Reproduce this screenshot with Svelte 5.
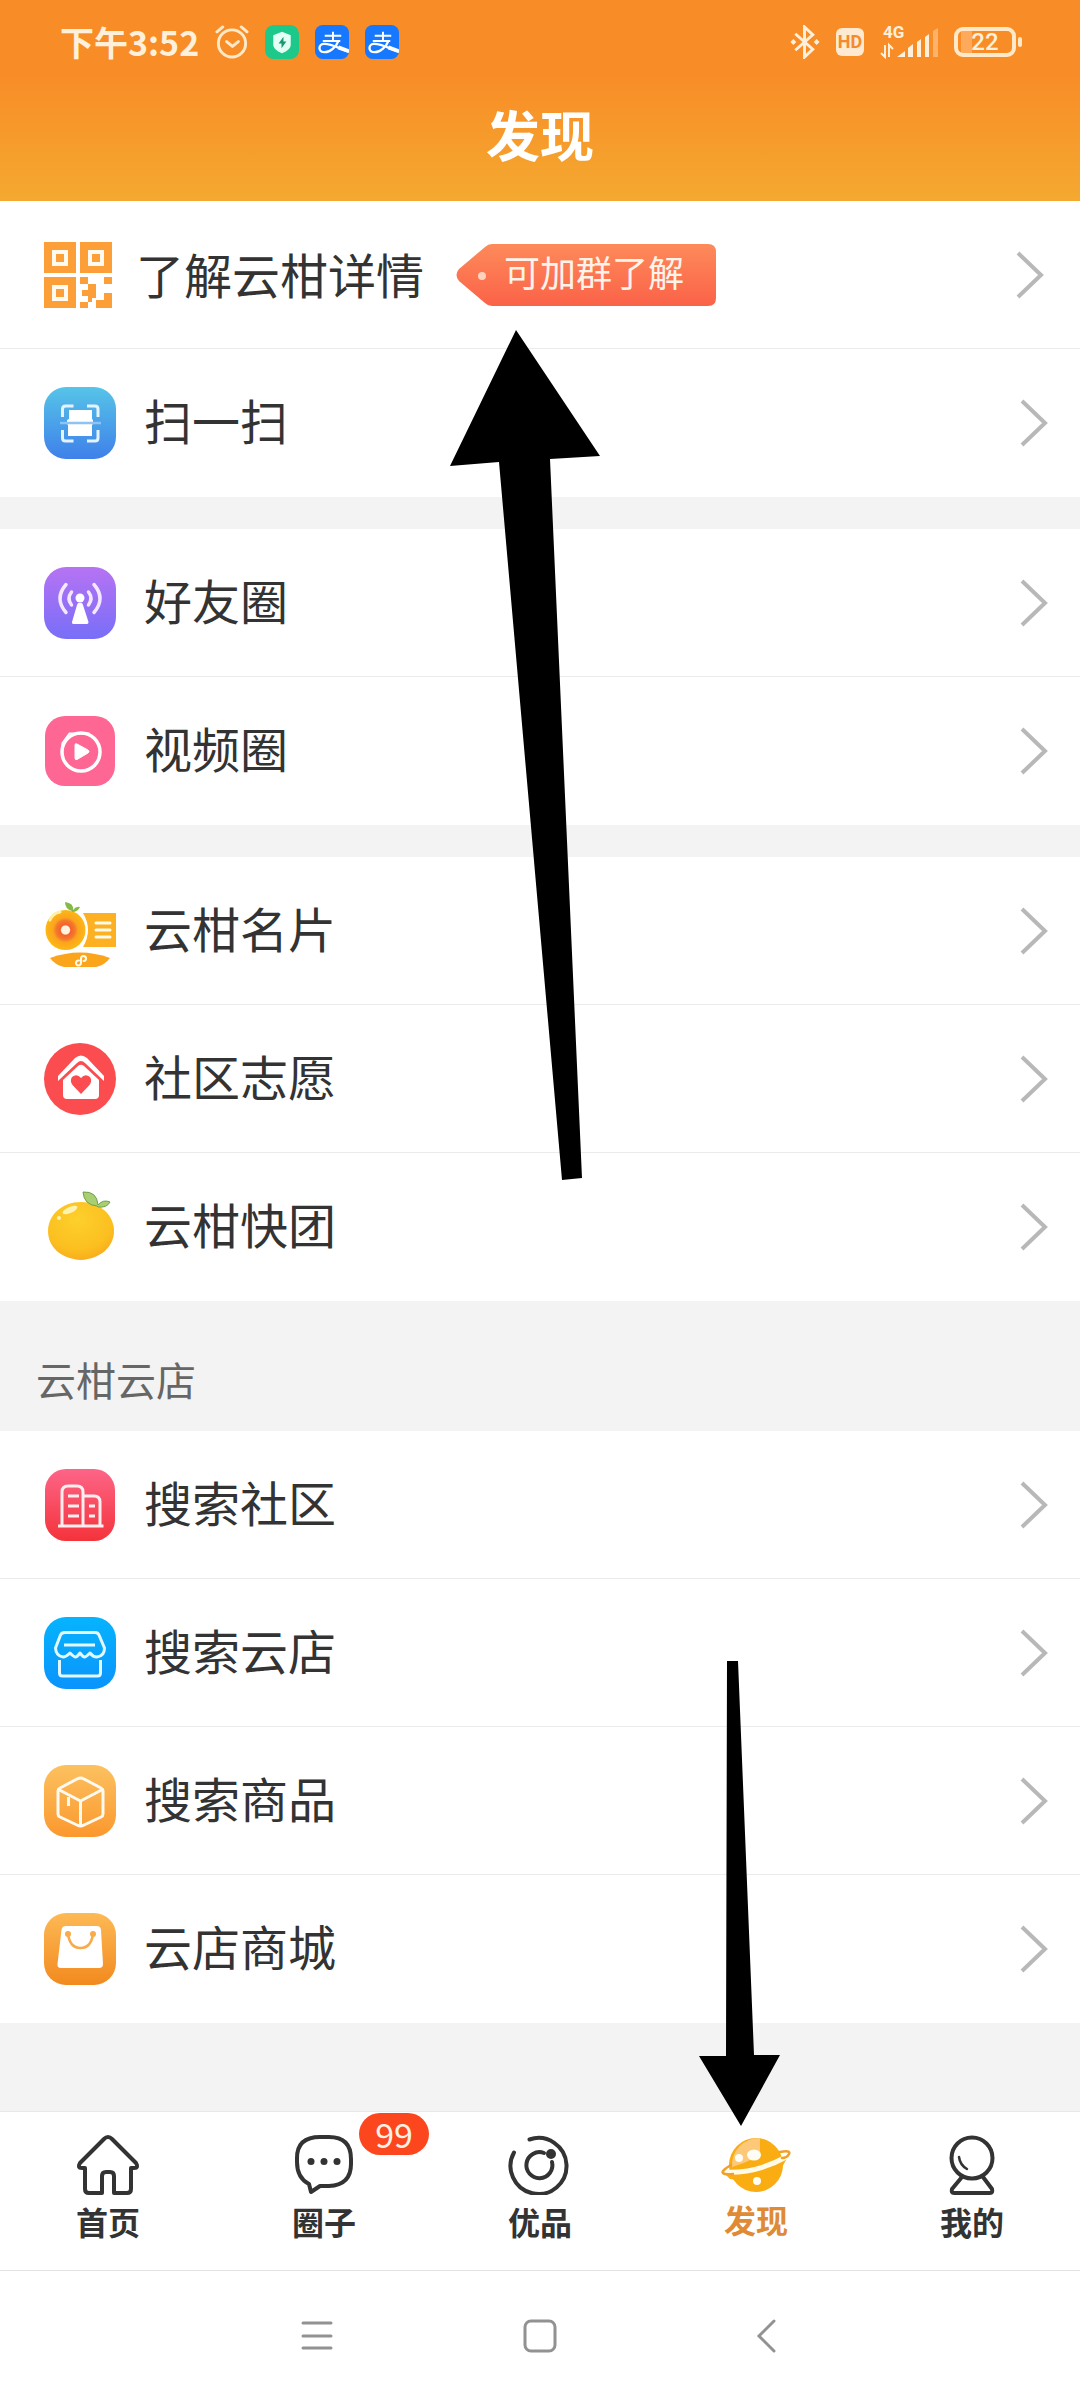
<script>
  const groups = [
    {
      rows: [
        { icon: 'qr', label: '了解云柑详情', tag: '可加群了解' },
        { icon: 'scan', label: '扫一扫' }
      ]
    },
    {
      rows: [
        { icon: 'antenna', label: '好友圈' },
        { icon: 'video', label: '视频圈' }
      ]
    },
    {
      rows: [
        { icon: 'card', label: '云柑名片' },
        { icon: 'volunteer', label: '社区志愿' },
        { icon: 'fruit', label: '云柑快团' }
      ]
    },
    {
      title: '云柑云店',
      rows: [
        { icon: 'building', label: '搜索社区' },
        { icon: 'store', label: '搜索云店' },
        { icon: 'box', label: '搜索商品' },
        { icon: 'bag', label: '云店商城' }
      ]
    }
  ];

  const tabs = [
    { icon: 'home', label: '首页' },
    { icon: 'chat', label: '圈子', badge: 99 },
    { icon: 'pick', label: '优品' },
    { icon: 'planet', label: '发现' },
    { icon: 'me', label: '我的' }
  ];

  let active = $state('planet');
</script>

{#snippet gradient(id, from, to)}
  <defs>
    <linearGradient {id} x1="0" y1="0" x2="0" y2="1">
      <stop offset="0" stop-color={from} />
      <stop offset="1" stop-color={to} />
    </linearGradient>
  </defs>
{/snippet}

{#snippet alipay()}
  <svg class="app" viewBox="0 0 35 35" aria-label="支付宝">
    <rect width="35" height="35" rx="8" fill="#1677ff" />
    <g fill="none" stroke="#fff" stroke-width="2">
      <path d="M10 11h17M18.500 7v9M8 16.500h18" />
      <path d="M24 16.500C22 22 16 28 10 28c-7 0-7-8-1-8.500C17 19 26 25 35 27.500" stroke-width="2.400" />
      <path d="M24 23l11 4" stroke-width="4" />
    </g>
  </svg>
{/snippet}

{#snippet rowIcon(name)}
  {#if name === 'qr'}
    <svg class="qr" viewBox="0 0 68 66" aria-hidden="true">
      <g fill="#fc9f39">
        <path d="M0 0h32v31H0zM36 0h32v31H36zM0 35h32v31H0z" />
        <path d="M36 35h8v7h-8zM60 35h8v7h-8zM44 42h8v14h-4v4h-4v-6h-6v-6h6zM36 60h8v6h-8zM60 51h8v15H52v-8h8z" />
      </g>
      <g fill="#fc9f39" stroke="#fffaf0" stroke-width="4">
        <path d="M10 10h12v12H10zM46 10h12v12H46zM10 45h12v12H10z" />
      </g>
    </svg>
  {:else}
    <svg class="icon" viewBox="0 0 72 72" aria-hidden="true">
      {#if name === 'scan'}
        {@render gradient('g-scan', '#56c4e8', '#3f80ea')}
        <rect width="72" height="72" rx="22" fill="url(#g-scan)" />
        <g fill="none" stroke="#e4f4ff" stroke-width="3">
          <path d="M18.500 30V22q0-3 3-3h8M43 19h8q3 0 3 3v8M18.500 43v8q0 3 3 3h8M43 54h8q3 0 3-3v-8" />
        </g>
        <path d="M25 23h23v9l1 1v4l-1 1v11H24V38l-1-1v-4l2-1z" fill="#fff" />
        <path d="M16 36h41" stroke="#8ec3f3" stroke-width="2.500" />
      {:else if name === 'antenna'}
        {@render gradient('g-ant', '#b673f3', '#786ef8')}
        <rect width="72" height="72" rx="22" fill="url(#g-ant)" />
        <circle cx="36" cy="31" r="4.500" fill="#fff" />
        <path d="M34.500 36h3q1 0 1.500 2l5.500 17q0 2-1.500 2H29.500q-2 0-1.500-2l5-17q.5-2 1.500-2z" fill="#fff" />
        <g fill="none" stroke="#f3e8ff" stroke-width="3.500" stroke-linecap="round">
          <path d="M22 17.500q-12 14 0 28M50 17.500q12 14 0 28" />
          <path d="M27.500 25q-5 6.500 0 13M44.500 25q5 6.500 0 13" />
        </g>
      {:else if name === 'video'}
        <rect x="1" y="1" width="70" height="70" rx="20" fill="#fe6694" />
        <circle cx="37" cy="37" r="19" fill="none" stroke="#fff" stroke-width="3.500" />
        <path d="M18.500 36V28l7-9.500h20" fill="none" stroke="#fff" stroke-width="2" />
        <path d="M33 29l11 6q2 1.500 0 3l-11 6.500q-2 1-2-1.500V30q0-2 2-1z" fill="#fff" stroke="#fff" />
      {:else if name === 'card'}
        <defs>
          <radialGradient id="g-card">
            <stop offset="0.200" stop-color="#fff3e0" />
            <stop offset="0.260" stop-color="#f4622a" />
            <stop offset="0.480" stop-color="#f47a2c" />
            <stop offset="0.620" stop-color="#fba41e" />
            <stop offset="1" stop-color="#fdb813" />
          </radialGradient>
        </defs>
        <path d="M39 18h33v34H39q10-17 0-34z" fill="#fdb022" />
        <path d="M52 28h14M52 35h14M52 42h14" stroke="#fffbe8" stroke-width="3" stroke-linecap="round" />
        <circle cx="21.500" cy="35" r="20" fill="url(#g-card)" />
        <path d="M6 25q3-7 10-8" stroke="#fff0a8" stroke-width="3" stroke-linecap="round" fill="none" />
        <path d="M28 16q-7-2-7-9 9 1 8 8 3-4 7-3-2 5-8 5z" fill="#86b948" />
        <path d="M6 63q30-11 60 0-5 7-14 9H20q-9-2-14-9z" fill="#fba51c" />
        <path d="M37 66V63.500a2.500 2.500 0 1 1 2.500 2.500M35 65.500a2.500 2.500 0 1 0 2 2.500V65" fill="none" stroke="#fffbe8" stroke-width="2" stroke-linecap="round" />
      {:else if name === 'volunteer'}
        <circle cx="36" cy="36" r="36" fill="#fb4c4f" />
        <path d="M14 33L31 15q6-5 12 0l17 18v5L41 20q-4-4-8 0L14 38z" fill="#fff" />
        <path d="M19 37L34 23q3-2.500 6 0l15 14v15q0 4-4 4H23q-4 0-4-4z" fill="#fff" />
        <path d="M37 51L28.500 42q-3-4-.5-8 5-4 9 1 4-5 9-1 2.500 4-.5 8z" fill="#fb4c4f" />
      {:else if name === 'fruit'}
        <defs>
          <radialGradient id="g-fruit" cx="0.450" cy="0.300" r="0.750">
            <stop offset="0" stop-color="#fdd02c" />
            <stop offset="0.700" stop-color="#fbbf20" />
            <stop offset="1" stop-color="#f9a81c" />
          </radialGradient>
        </defs>
        <path d="M37 11c19 0 33 13 33 29S56 68 37 69C17 68 4 56 4 40s14-29 33-29z" fill="url(#g-fruit)" />
        <ellipse cx="26" cy="19" rx="8" ry="3" transform="rotate(-24 26 19)" fill="#fff2b0" />
        <circle cx="15" cy="27" r="2" fill="#fff2b0" />
        <path d="M53 15Q40 14 39 1q14-1 15 13 5-6 12-3-3 6-12 5z" fill="#a9cf72" stroke="#6fa04a" stroke-width="1" />
      {:else if name === 'building'}
        {@render gradient('g-bld', '#fd6587', '#f4333b')}
        <rect x="1" width="70" height="72" rx="21" fill="url(#g-bld)" />
        <g fill="none" stroke="#ffeef0" stroke-width="3">
          <path d="M14 57h45.500M18 57V23q0-6 6-6h9q6 0 6 6v34M39 27h11q6 0 6 6v24" />
          <path d="M24 27h11M24 37h11M24 47h11M45 37h6M45 47h6" />
        </g>
      {:else if name === 'store'}
        {@render gradient('g-store', '#06b4fd', '#0a93fc')}
        <rect width="72" height="72" rx="22" fill="url(#g-store)" />
        <g fill="none" stroke="#e2f8ff" stroke-width="3" stroke-linejoin="round">
          <path d="M21 15.500h30q3 0 4 2.500l5.500 13q0 8-7.500 9-4 0-7-4-4 4-5.500 4-1.500 0-4.500-4-3 4-4.500 4-1.500 0-5.500-4-4 4-7 4-7-1-7.500-9l5-13q1-2.500 4.500-2.500z" />
          <path d="M20 28h31M15.500 43v13q0 3 3 3h35q3 0 3-3V43" />
        </g>
      {:else if name === 'box'}
        {@render gradient('g-box', '#fcc160', '#fb982e')}
        <rect width="72" height="72" rx="22" fill="url(#g-box)" />
        <g fill="none" stroke="#fffaf0" stroke-width="3" stroke-linejoin="round">
          <path d="M33 14q3.500-2 7 0l17 9q2 1 2 3v23q0 2-2 3l-17 8q-3.500 2-7 0l-17-8q-2-1-2-3V26q0-2 2-3z" />
          <path d="M14.500 24.500L36.500 36l22-11.500M36.500 36v24M24.500 32v9" />
        </g>
      {:else}
        {@render gradient('g-bag', '#fdb955', '#f28a1e')}
        <rect width="72" height="72" rx="22" fill="url(#g-bag)" />
        <path d="M22 13h31q3.500 0 4 4l2 34q0 4-4 4H17q-4 0-3.500-4l4-34q.5-4 4.500-4z" fill="#fff" />
        <path d="M24 21q2 14 12.500 14T49 21" fill="none" stroke="#f9ab49" stroke-width="2.500" />
        <circle cx="24" cy="21" r="3" fill="#f9ab49" />
        <circle cx="49" cy="21" r="3" fill="#f9ab49" />
      {/if}
    </svg>
  {/if}
{/snippet}

{#snippet tabIcon(name)}
  <svg class="tab-icon" viewBox="0 0 72 60" aria-hidden="true">
    <g fill="none" stroke="#333" stroke-width="4" stroke-linejoin="round" stroke-linecap="round">
      {#if name === 'home'}
        <path d="M32 4q4-4 8 0l24 24q3 5-2 5h-3v21q0 4-4 4H42V41q0-4-4-4h-4q-4 0-4 4v17H17q-4 0-4-4V33h-3q-5 0-2-5z" />
      {:else if name === 'chat'}
        <path d="M32 2h9q22 0 22 22v5q0 21-22 22h-9l-9 6-2-8q-12-6-12-22v-4Q9 2 32 2z" />
        <g stroke="none" fill="#333">
          <circle cx="23" cy="26.500" r="3.500" />
          <circle cx="36" cy="26.500" r="3.500" />
          <circle cx="49" cy="26.500" r="3.500" />
        </g>
      {:else if name === 'pick'}
        <path d="M10 17.500A28 28 0 1 0 25.500 4.500" />
        <path d="M40 18A13 13 0 1 0 48 27" />
        <circle cx="47" cy="19" r="3" fill="#333" />
      {:else if name === 'planet'}
        <circle cx="36" cy="30" r="27" fill="#f9ad12" stroke="none" />
        <path d="M40 3v15q-3 6-28 14A27 27 0 0 1 40 3z" fill="#fdc878" stroke="none" />
        <path d="M4 38q34 2 66-20l-9 16Q36 48 10 44z" fill="#f9ad12" stroke="none" />
        <path d="M3 37q33 2 63-15" stroke="#fffbe8" stroke-width="5" />
        <path d="M11 30q-10 6-8 8t10 1M60 17q11-2 9 2t-7 4" stroke="#f0a12c" stroke-width="2.500" />
        <g fill="#fffdf4" stroke="none">
          <ellipse cx="34" cy="20" rx="7" ry="5.500" />
          <circle cx="19" cy="23" r="4" />
          <circle cx="37" cy="46" r="4" />
        </g>
      {:else}
        <circle cx="36" cy="23" r="20.500" />
        <path d="M26 42L16 54q-1 4 2 4h36q3 0 2-4l-9-12" />
        <path d="M23 22q1 8 8 12" stroke-width="2.500" />
      {/if}
    </g>
  </svg>
{/snippet}

<div class="page">
  <header>
    <div class="status">
      <span class="time">下午3:52</span>
      <svg class="app" viewBox="0 0 35 35" aria-hidden="true">
        <g fill="none" stroke="#ffe9c8" stroke-width="3" stroke-linecap="round" stroke-linejoin="round">
          <circle cx="17.500" cy="19" r="14" />
          <path d="M12 17l6 5 6-5M2 7l6-5M33 7l-6-5" />
        </g>
      </svg>
      <svg class="app" viewBox="0 0 35 35" aria-hidden="true">
        <rect width="35" height="35" rx="9" fill="#1cc98a" />
        <path d="M17.500 7l9 3.500v10q0 5-9 8.500-9-3.500-9-8.500v-10z" fill="#e4fff4" />
        <path d="M19 12l-5 7h3v5l5-7h-3z" fill="#169a72" />
      </svg>
      {@render alipay()}
      {@render alipay()}
      <div class="status-right">
        <svg class="bluetooth" viewBox="0 0 30 35" aria-hidden="true">
          <path d="M5 9l18 16-8.500 8V2L23 10 5 26" fill="none" stroke="#fff0dc" stroke-width="3" />
          <path d="M3 14.500l3 3-3 3-3-3zM27 14.500l3 3-3 3-3-3z" fill="#fff0dc" />
        </svg>
        <span class="hd">HD</span>
        <div class="network">
          <span>4G</span>
          <svg viewBox="0 0 58 34" aria-hidden="true">
            <path d="M5 20v12l-4-4M9 32V20l4 4" fill="none" stroke="#fff0dc" stroke-width="2" />
            <path d="M17 32l8-6v6zM28 23l5-4v13h-5zM37 17l4-3v18h-4zM45 12l4-3v23h-4z" fill="#fff0dc" />
            <path d="M53 6l5-3v29h-5z" fill="#ffb36a" />
          </svg>
        </div>
        <div class="battery"><span>22</span></div>
      </div>
    </div>
    <h1>发现</h1>
  </header>

  <main>
    {#each groups as group}
      <section>
        {#if group.title}<h2>{group.title}</h2>{/if}
        {#each group.rows as row}
          <a class="row" class:featured={row.tag} href="#{row.icon}">
            {@render rowIcon(row.icon)}
            <span class="label">{row.label}</span>
            {#if row.tag}
              <span class="tag">
                <svg viewBox="0 0 260 62" aria-hidden="true">
                  {@render gradient('g-tag', '#fd8a5a', '#fb6248')}
                  <path d="M36 0H252q8 0 8 8V54q0 8-8 8H36q-4 0-7-3L3 37q-5-6 0-12L29 3q3-3 7-3z" fill="url(#g-tag)" />
                  <circle cx="26" cy="32" r="4" fill="#ffd2bd" />
                </svg>
                <span>{row.tag}</span>
              </span>
            {/if}
            <svg class="chevron" viewBox="0 0 28 48" aria-hidden="true">
              <path d="M2 2l23 22L2 46" fill="none" stroke="#b8b8b8" stroke-width="4" />
            </svg>
          </a>
        {/each}
      </section>
    {/each}
  </main>

  <nav class="tabs" aria-label="主导航">
    {#each tabs as tab}
      <button class="tab" class:active={active === tab.icon} onclick={() => (active = tab.icon)}>
        {@render tabIcon(tab.icon)}
        <span>{tab.label}</span>
        {#if tab.badge}<b class="badge">{tab.badge}</b>{/if}
      </button>
    {/each}
  </nav>

  <div class="system">
    <button aria-label="菜单">
      <svg viewBox="0 0 36 36"><path d="M4 5h28M4 18h28M4 30h28" /></svg>
    </button>
    <button aria-label="主页">
      <svg viewBox="0 0 36 36"><rect x="3" y="3" width="30" height="30" rx="6" /></svg>
    </button>
    <button aria-label="返回">
      <svg viewBox="0 0 36 36"><path d="M29 3L14 18l15 15" /></svg>
    </button>
  </div>

  <svg class="pointers" viewBox="0 0 1080 2400" aria-hidden="true">
    <path d="M516 330L600 456 550 459 582 1178 562 1180 499 462 450 466z" />
    <path d="M727 1661H738L754 2055H780L741 2126 699 2056H726z" />
  </svg>
</div>

<style>
  :global(body) {
    margin: 0;
  }

  .page {
    position: relative;
    display: flex;
    flex-direction: column;
    min-height: 100vh;
    background: #f3f3f3;
    color: #333;
    font-family: 'Noto Sans CJK SC', 'Noto Sans', sans-serif;
  }

  svg {
    display: block;
    flex: none;
  }

  header {
    box-sizing: border-box;
    height: 201px;
    background: linear-gradient(#f88d27 38%, #f4a930);
    color: #fff;
  }

  .status {
    display: flex;
    align-items: center;
    gap: 16px;
    height: 84px;
    padding: 0 64px 0 60px;
  }

  .time {
    color: #fff0dc;
    font-size: 34px;
    font-weight: 700;
    line-height: 40px;
  }

  .app {
    width: 34px;
    height: 34px;
  }

  .status-right {
    display: flex;
    align-items: center;
    gap: 16px;
    margin-left: auto;
    font-family: Roboto, sans-serif;
  }

  .bluetooth {
    width: 30px;
    height: 34px;
  }

  .hd {
    width: 28px;
    border-radius: 6px;
    background: #ffe9d0;
    color: #f48a2e;
    font-size: 18px;
    font-weight: 700;
    line-height: 28px;
    text-align: center;
  }

  .network {
    display: grid;
  }

  .network > * {
    grid-area: 1 / 1;
  }

  .network svg {
    width: 58px;
    height: 34px;
  }

  .network span {
    padding-left: 3px;
    color: #fff0dc;
    font-size: 17px;
    font-weight: 700;
    line-height: 14px;
  }

  .battery {
    position: relative;
    box-sizing: border-box;
    width: 62px;
    height: 30px;
    border: 4px solid #ffe9c8;
    border-radius: 9px;
    background: linear-gradient(90deg, transparent 3px, #ffa95a 3px, #ffa95a 14px, transparent 14px);
    color: #fff0dc;
    font-size: 24px;
    font-weight: 500;
    line-height: 23px;
    text-align: center;
  }

  .battery::after {
    position: absolute;
    top: 6px;
    right: -10px;
    width: 4px;
    height: 10px;
    border-radius: 2px;
    background: #ffe9c8;
    content: '';
  }

  h1 {
    margin: 0;
    padding-top: 10px;
    font-size: 54px;
    font-weight: 700;
    line-height: 80px;
    text-align: center;
  }

  main {
    display: flex;
    flex: 1;
    flex-direction: column;
    gap: 32px;
    padding-bottom: 88px;
  }

  section:has(h2) {
    margin-top: -32px;
  }

  h2 {
    margin: 0;
    padding: 48px 36px 22px;
    color: #666;
    font-size: 40px;
    font-weight: 400;
    line-height: 60px;
  }

  .row {
    display: flex;
    box-sizing: border-box;
    align-items: center;
    height: 148px;
    padding: 0 32px 0 44px;
    border-bottom: 1px solid #ebebeb;
    background: #fff;
    color: inherit;
    text-decoration: none;
  }

  .row:last-child {
    border-bottom-color: #fff;
  }

  .icon {
    width: 72px;
    height: 72px;
  }

  .qr {
    width: 68px;
    height: 66px;
  }

  .label {
    margin-left: 28px;
    padding-bottom: 8px;
    font-size: 48px;
    line-height: 72px;
  }

  .featured {
    padding-right: 36px;
  }

  .featured .label {
    margin-left: 24px;
    padding-bottom: 4px;
  }

  .tag {
    display: grid;
    align-items: center;
    margin-left: 32px;
    color: #fff3ea;
    font-size: 36px;
    line-height: 54px;
  }

  .tag > * {
    grid-area: 1 / 1;
  }

  .tag svg {
    width: 260px;
    height: 62px;
  }

  .tag > span {
    padding: 0 0 8px 48px;
  }

  .chevron {
    width: 28px;
    height: 48px;
    margin-left: auto;
  }

  button {
    margin: 0;
    padding: 0;
    border: 0;
    background: none;
    color: inherit;
    font: inherit;
  }

  .tabs {
    display: grid;
    grid-template-columns: repeat(5, 1fr);
    box-sizing: border-box;
    height: 159px;
    border-top: 1px solid #e8e8e8;
    background: #fff;
  }

  .tab {
    position: relative;
    display: flex;
    flex-direction: column;
    align-items: center;
    padding-top: 23px;
    font-size: 32px;
    font-weight: 700;
    line-height: 40px;
  }

  .tab > span {
    margin-top: 6px;
  }

  .tab.active {
    color: #df8a35;
  }

  .tab.active > span {
    margin-top: 4px;
  }

  .tab-icon {
    width: 72px;
    height: 60px;
  }

  .badge {
    position: absolute;
    top: 1px;
    left: calc(50% + 35px);
    width: 70px;
    border-radius: 22px;
    background: #fb461e;
    color: #fff0e4;
    font-family: 'Noto Sans CJK SC', sans-serif;
    font-size: 34px;
    font-weight: 400;
    line-height: 42px;
    text-align: center;
  }

  .system {
    display: grid;
    grid-template-columns: repeat(3, 1fr);
    box-sizing: border-box;
    height: 130px;
    padding: 0 19%;
    border-top: 1px solid #e2e2e2;
    background: #fff;
  }

  .system button {
    display: grid;
    place-items: center;
  }

  .system svg {
    width: 36px;
    height: 36px;
    fill: none;
    stroke: #929292;
    stroke-width: 3;
    stroke-linecap: round;
  }

  .pointers {
    position: absolute;
    top: 0;
    left: 0;
    width: 100%;
    pointer-events: none;
  }
</style>
